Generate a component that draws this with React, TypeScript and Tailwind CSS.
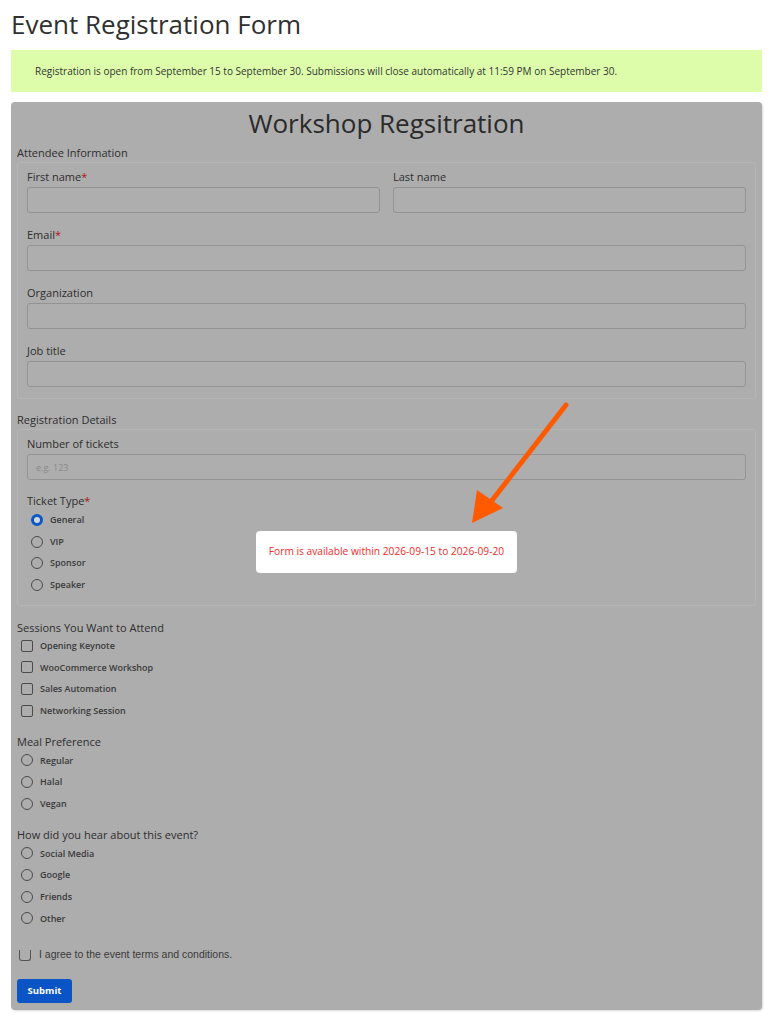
import React from 'react';

const font = { fontFamily: '"Open Sans", "Noto Sans", sans-serif' };

const Req = () => <span className="text-[#b3121a]">*</span>;

const Field = ({
  label,
  required,
  placeholder,
  last,
}: {
  label: string;
  required?: boolean;
  placeholder?: string;
  last?: boolean;
}) => (
  <div className={last ? 'flex-1 mb-[11px]' : 'flex-1 mb-[13px]'}>
    <div className="h-[19px] flex items-center text-[11px] font-medium text-[#2e2e2e]">
      {label}
      {required && <Req />}
    </div>
    <input
      type="text"
      placeholder={placeholder}
      className="block w-full h-[26px] rounded-[3px] border border-[#939393] bg-[#aeaeae] px-2 text-[9px] text-[#333] placeholder-[#8a8a8a] outline-none"
    />
  </div>
);

const Radio = ({ label, checked }: { label: string; checked?: boolean }) => (
  <div className="h-[21.7px] flex items-center gap-[7px]">
    {checked ? (
      <span className="w-[12px] h-[12px] rounded-full border-[3.5px] border-[#0b5ac2] bg-[#d6d6d6]" />
    ) : (
      <span className="w-[12px] h-[12px] rounded-full border border-[#4b4b4b]" />
    )}
    <span className="text-[9px] font-semibold text-[#3a3a3a]">{label}</span>
  </div>
);

const Check = ({ label }: { label: string }) => (
  <div className="h-[21.7px] flex items-center gap-[7px]">
    <span className="w-[12px] h-[12px] rounded-[2px] border border-[#4b4b4b]" />
    <span className="text-[9px] font-semibold text-[#3a3a3a]">{label}</span>
  </div>
);

const Group = ({ title, children, className = '' }: { title: string; children: React.ReactNode; className?: string }) => (
  <div className={className}>
    <div className="h-[14px] flex items-center text-[11px] font-medium text-[#2e2e2e]">{title}</div>
    <div className="pl-[4px]">{children}</div>
  </div>
);

export default function App() {
  return (
    <div className="relative w-[773px] min-h-[1024px] bg-white px-[11px] pt-[8px]" style={font}>
      <h1 className="text-[26px] leading-[32px] font-medium text-[#303030]">Event Registration Form</h1>

      {/* Notice banner */}
      <div className="mt-[10px] h-[42px] bg-[#ddfdaa] flex items-center pl-[24px] text-[10px] text-[#333]">
        Registration is open from September 15 to September 30. Submissions will close automatically at 11:59 PM on September 30.
      </div>

      {/* Disabled form */}
      <div className="mt-[10px] bg-[#adadad] rounded-[4px] px-[6px] pb-[7px] shadow-[1px_1px_2px_rgba(0,0,0,0.15)]">
        <h2 className="h-[43px] flex items-center justify-center text-[26px] font-medium text-[#2a2a2a]">Workshop Regsitration</h2>

        <div className="h-[17px] flex items-center text-[11px] font-medium text-[#2e2e2e]">Attendee Information</div>
        <div className="border border-[#b5b5b5] rounded-[3px] px-[9px] pt-[5px]">
          <div className="flex gap-[13px]">
            <Field label="First name" required />
            <Field label="Last name" />
          </div>
          <Field label="Email" required />
          <Field label="Organization" />
          <Field label="Job title" last />
        </div>

        <div className="mt-[12px] h-[18px] flex items-center text-[11px] font-medium text-[#2e2e2e]">Registration Details</div>
        <div className="border border-[#b5b5b5] rounded-[3px] px-[9px] pt-[5px] pb-[9px]">
          <Field label="Number of tickets" placeholder="e.g. 123" />
          <div className="h-[16px] flex items-center text-[11px] font-medium text-[#2e2e2e]">
            Ticket Type<Req />
          </div>
          <div className="pl-[4px]">
            <Radio label="General" checked />
            <Radio label="VIP" />
            <Radio label="Sponsor" />
            <Radio label="Speaker" />
          </div>
        </div>

        <Group title="Sessions You Want to Attend" className="mt-[15px]">
          <Check label="Opening Keynote" />
          <Check label="WooCommerce Workshop" />
          <Check label="Sales Automation" />
          <Check label="Networking Session" />
        </Group>

        <Group title="Meal Preference" className="mt-[14px]">
          <Radio label="Regular" />
          <Radio label="Halal" />
          <Radio label="Vegan" />
        </Group>

        <Group title="How did you hear about this event?" className="mt-[14px]">
          <Radio label="Social Media" />
          <Radio label="Google" />
          <Radio label="Friends" />
          <Radio label="Other" />
        </Group>

        <div className="mt-[18px] h-[16px] flex items-center gap-[8px] pl-[2px]">
          <span className="w-[12px] h-[11px] rounded-b-[3px] border border-t-0 border-[#555]" />
          <span className="text-[10.5px] text-[#3a3a3a]" style={{ fontFamily: '"Liberation Sans", Arial, sans-serif' }}>
            I agree to the event terms and conditions.
          </span>
        </div>

        <button className="block mt-[16px] w-[55px] h-[24px] rounded-[3px] bg-[#0a54c6] text-white text-[9.5px] font-bold">
          Submit
        </button>
      </div>

      {/* Availability notice */}
      <div className="absolute left-[256px] top-[531px] w-[261px] h-[42px] rounded-[4px] bg-white flex items-center justify-center text-[10.2px] text-[#ee2a2a]">
        Form is available within 2026-09-15 to 2026-09-20
      </div>

      {/* Annotation arrow */}
      <svg className="absolute left-[460px] top-[400px]" width="120" height="130" viewBox="460 400 120 130">
        <line x1="566" y1="405" x2="490" y2="503" stroke="#ff5a00" strokeWidth="5" strokeLinecap="round" />
        <polygon points="472,523 477,490 503,508" fill="#ff5a00" />
      </svg>
    </div>
  );
}
